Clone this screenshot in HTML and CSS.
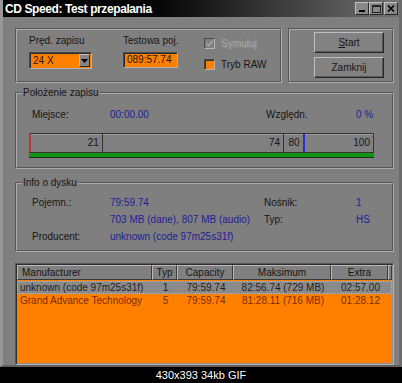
FILE: index.html
```html
<!DOCTYPE html>
<html lang="pl">

<head>
    <meta charset="UTF-8">
    <title>CD Speed: Test przepalania</title>
    <link rel="stylesheet" href="styles.css">
</head>

<body>
    <div class="window">
        <div class="titlebar">
            <span class="title">CD Speed: Test przepalania</span>
            <div class="cap-buttons">
                <span class="cap-btn"><svg width="8" height="8" viewBox="0 0 8 8"><rect x="1" y="5" width="6" height="2" fill="#000"/></svg></span>
                <span class="cap-btn"><svg width="9" height="8" viewBox="0 0 9 8"><rect x="0.5" y="0.5" width="8" height="7" fill="none" stroke="#222"/><rect x="0" y="0" width="9" height="2" fill="#222"/></svg></span>
                <span class="cap-btn close"><svg width="8" height="7" viewBox="0 0 8 7"><path d="M1 0.5l6 6M7 0.5l-6 6" stroke="#000" stroke-width="1.6"/></svg></span>
            </div>
        </div>

        <div class="client">
            <div class="top-row">
                <div class="panel settings">
                    <div class="field speed">
                        <label>Pręd. zapisu</label>
                        <div class="combo">
                            <span>24 X</span>
                            <span class="combo-arrow"><svg width="7" height="4" viewBox="0 0 7 4"><path d="M0 0h7L3.5 4z" fill="#000"/></svg></span>
                        </div>
                    </div>
                    <div class="field pos">
                        <label>Testowa poj.</label>
                        <div class="edit">089:57.74</div>
                    </div>
                    <div class="checks">
                        <div class="check disabled">
                            <span class="box"><svg width="9" height="9" viewBox="0 0 9 9"><path d="M1.5 4.5l2 2.2 4-5" stroke="#a9a9a9" stroke-width="1.6" fill="none"/></svg></span>
                            Symuluj
                        </div>
                        <div class="check">
                            <span class="box on"></span>
                            Tryb RAW
                        </div>
                    </div>
                </div>
                <div class="panel actions">
                    <button class="btn"><u>S</u>tart</button>
                    <button class="btn">Zamknij</button>
                </div>
            </div>

            <fieldset class="group">
                <legend>Położenie zapisu</legend>
                <div class="position-body">
                    <div class="info-row">
                        <span>Miejsce:</span>
                        <span class="val">00:00.00</span>
                        <span>Względn.</span>
                        <span class="val">0 %</span>
                    </div>
                    <div class="track">
                        <div class="track-bar">
                            <div class="seg" style="width:21%">21</div>
                            <div class="seg" style="width:53%">74</div>
                            <div class="seg mark" style="width:6%">80</div>
                            <div class="seg" style="width:20%">100</div>
                        </div>
                        <div class="track-fill"></div>
                    </div>
                </div>
            </fieldset>

            <fieldset class="group disc">
                <legend>Info o dysku</legend>
                <div class="disc-body">
                    <span>Pojemn.:</span>
                    <span class="val">79:59.74</span>
                    <span>Nośnik:</span>
                    <span class="val">1</span>

                    <span></span>
                    <span class="val">703 MB (dane), 807 MB (audio)</span>
                    <span>Typ:</span>
                    <span class="val">HS</span>

                    <span>Producent:</span>
                    <span class="val wide">unknown (code 97m25s31f)</span>
                </div>
            </fieldset>

            <div class="list">
                <div class="list-head">
                    <span class="left">Manufacturer</span>
                    <span>Typ</span>
                    <span>Capacity</span>
                    <span>Maksimum</span>
                    <span>Extra</span>
                    <span></span>
                </div>
                <div class="list-rows">
                    <div class="list-row selected">
                        <span class="left">unknown (code 97m25s31f)</span>
                        <span>1</span>
                        <span>79:59.74</span>
                        <span>82:56.74 (729 MB)</span>
                        <span>02:57.00</span>
                    </div>
                    <div class="list-row">
                        <span class="left">Grand Advance Technology</span>
                        <span>5</span>
                        <span>79:59.74</span>
                        <span>81:28.11 (716 MB)</span>
                        <span>01:28.12</span>
                    </div>
                </div>
            </div>
        </div>
    </div>

    <div class="caption">430x393 34kb GIF</div>
</body>

</html>
```

FILE: styles.css
```css
body {
    margin: 0;
    width: 402px;
    background: #000;
    font-family: "Liberation Sans", Arial, sans-serif;
    font-size: 10px;
    color: #161616;
}

.window {
    width: 402px;
    height: 367px;
    box-sizing: border-box;
    display: flex;
    flex-direction: column;
    background: #7f7f7f;
    border-left: 3px solid #989898;
    border-right: 3px solid #6c6c6c;
    border-bottom: 2px solid #5e5e5e;
}

.titlebar {
    height: 17px;
    display: flex;
    align-items: center;
    justify-content: space-between;
    padding: 0 1px 0 2px;
    background: linear-gradient(to right, #000 0%, #060606 40%, #727272 100%);
}

.title {
    color: #fff;
    font-weight: bold;
    font-size: 12px;
    letter-spacing: -0.4px;
}

.cap-buttons {
    display: flex;
}

.cap-btn {
    width: 14px;
    height: 13px;
    box-sizing: border-box;
    display: flex;
    align-items: center;
    justify-content: center;
    background: #888;
    border: 1px solid;
    border-color: #c2c2c2 #2a2a2a #2a2a2a #c2c2c2;
}

.cap-btn.close {
    margin-left: 1px;
}

.client {
    flex: 1;
    display: flex;
    flex-direction: column;
    padding: 11px 5px 0 12px;
    min-height: 0;
}

/* top row: settings + buttons */
.top-row {
    display: flex;
    gap: 6px;
    height: 55px;
}

.panel {
    box-sizing: border-box;
    border: 2px groove #acacac;
}

.settings {
    width: 267px;
    display: flex;
    padding: 5px 0 0 12px;
}

.field label {
    display: block;
    line-height: 12px;
    white-space: nowrap;
}

.speed {
    width: 63px;
}

.pos {
    width: 55px;
    margin-left: 31px;
}

.combo {
    margin-top: 5px;
    height: 17px;
    box-sizing: border-box;
    display: flex;
    align-items: center;
    justify-content: space-between;
    padding: 0 1px 0 3px;
    background: #ff8000;
    border: 1px solid;
    border-color: #4a4a4a #b2b2b2 #b2b2b2 #4a4a4a;
    box-shadow: inset 1px 1px #2a2a2a;
}

.combo-arrow {
    width: 11px;
    height: 13px;
    box-sizing: border-box;
    display: flex;
    align-items: center;
    justify-content: center;
    background: #858585;
    border: 1px solid;
    border-color: #c0c0c0 #2a2a2a #2a2a2a #c0c0c0;
}

.edit {
    margin-top: 5px;
    height: 16px;
    box-sizing: border-box;
    padding-left: 3px;
    line-height: 14px;
    background: #ff8000;
    border: 1px solid;
    border-color: #4a4a4a #b2b2b2 #b2b2b2 #4a4a4a;
    box-shadow: inset 1px 1px #2a2a2a;
}

.checks {
    margin-left: 26px;
    padding-top: 2px;
    display: flex;
    flex-direction: column;
    gap: 8px;
}

.check {
    display: flex;
    align-items: center;
    gap: 6px;
    height: 13px;
}

.check.disabled {
    color: #a4a4a4;
    text-shadow: 1px 1px 0 #8e8e8e;
}

.box {
    width: 11px;
    height: 11px;
    box-sizing: border-box;
    display: flex;
    align-items: center;
    justify-content: center;
    background: #808080;
    border: 1px solid;
    border-color: #4a4a4a #b4b4b4 #b4b4b4 #4a4a4a;
}

.box.on {
    background: #ff8000;
    box-shadow: inset 1px 1px #2e2e2e;
}

.actions {
    flex: 1;
    display: flex;
    flex-direction: column;
    align-items: flex-end;
    gap: 4px;
    padding: 2px 8px 0 0;
}

.btn {
    width: 70px;
    height: 21px;
    padding: 0;
    font: inherit;
    color: #161616;
    background: #828282;
    border: 1px solid;
    border-color: #bebebe #262626 #262626 #bebebe;
    box-shadow: inset -1px -1px #5a5a5a;
}

/* group boxes */
.group {
    margin: 4px 0 0;
    padding: 0;
    min-width: 0;
    border: 2px groove #acacac;
}

.group legend {
    margin-left: 5px;
    padding: 0 1px;
    line-height: 12px;
    font-size: 10px;
}

.group.disc {
    margin-top: 8px;
}

.val {
    color: #1e1e96;
}

.position-body {
    padding: 10px 0 9px 15px;
}

.info-row {
    display: grid;
    grid-template-columns: 78px 156px 90px auto;
    line-height: 12px;
}

.track {
    width: 345px;
    margin: 12px 0 0 -3px;
}

.track-bar {
    height: 20px;
    box-sizing: border-box;
    display: flex;
    background: #808080;
    border: 1px solid #343434;
    border-left: 2px solid #c03636;
    box-shadow: inset 0 1px #9c9c9c;
}

.seg {
    box-sizing: border-box;
    text-align: right;
    padding-right: 3px;
    line-height: 18px;
    border-right: 1px solid #343434;
}

.seg.mark {
    border-right: 2px solid #2c2cd6;
}

.seg:last-child {
    border-right: none;
}

.track-fill {
    height: 5px;
    box-sizing: border-box;
    background: #129512;
    border-bottom: 1px solid #1e2e1e;
}

.disc-body {
    display: grid;
    grid-template-columns: 78px 154px 92px auto;
    line-height: 17px;
    padding: 5px 0 5px 15px;
}

.disc-body .wide {
    grid-column: span 3;
}

/* results list */
.list {
    flex: 1;
    margin-top: 11px;
    display: flex;
    flex-direction: column;
    background: #ff8000;
    border: 1px solid;
    border-color: #555 #b2b2b2 #b2b2b2 #555;
    box-shadow: inset 1px 1px #2e2e2e, inset -1px -1px #8e8e8e;
    padding: 1px;
    min-height: 0;
}

.list-head,
.list-row {
    display: grid;
    grid-template-columns: 135px 25px 56px 98px 57px 1fr;
}

.list-head span {
    height: 15px;
    box-sizing: border-box;
    line-height: 13px;
    text-align: center;
    background: #808080;
    border: 1px solid;
    border-color: #bababa #3a3a3a #3a3a3a #bababa;
}

.list-head .left {
    text-align: left;
    padding-left: 4px;
}

.list-rows {
    padding-top: 1px;
}

.list-row {
    height: 13px;
    box-sizing: border-box;
    line-height: 11px;
    border: 1px solid transparent;
    color: #7c2c00;
}

.list-row span {
    text-align: center;
    white-space: nowrap;
}

.list-row .left {
    text-align: left;
    padding-left: 2px;
}

.list-row.selected {
    color: #1e1e1e;
    background: #8a8a8a;
    border: 1px dotted #b8b8b8;
}

.caption {
    height: 16px;
    line-height: 16px;
    text-align: center;
    color: #fff;
    font-size: 11px;
}
```
